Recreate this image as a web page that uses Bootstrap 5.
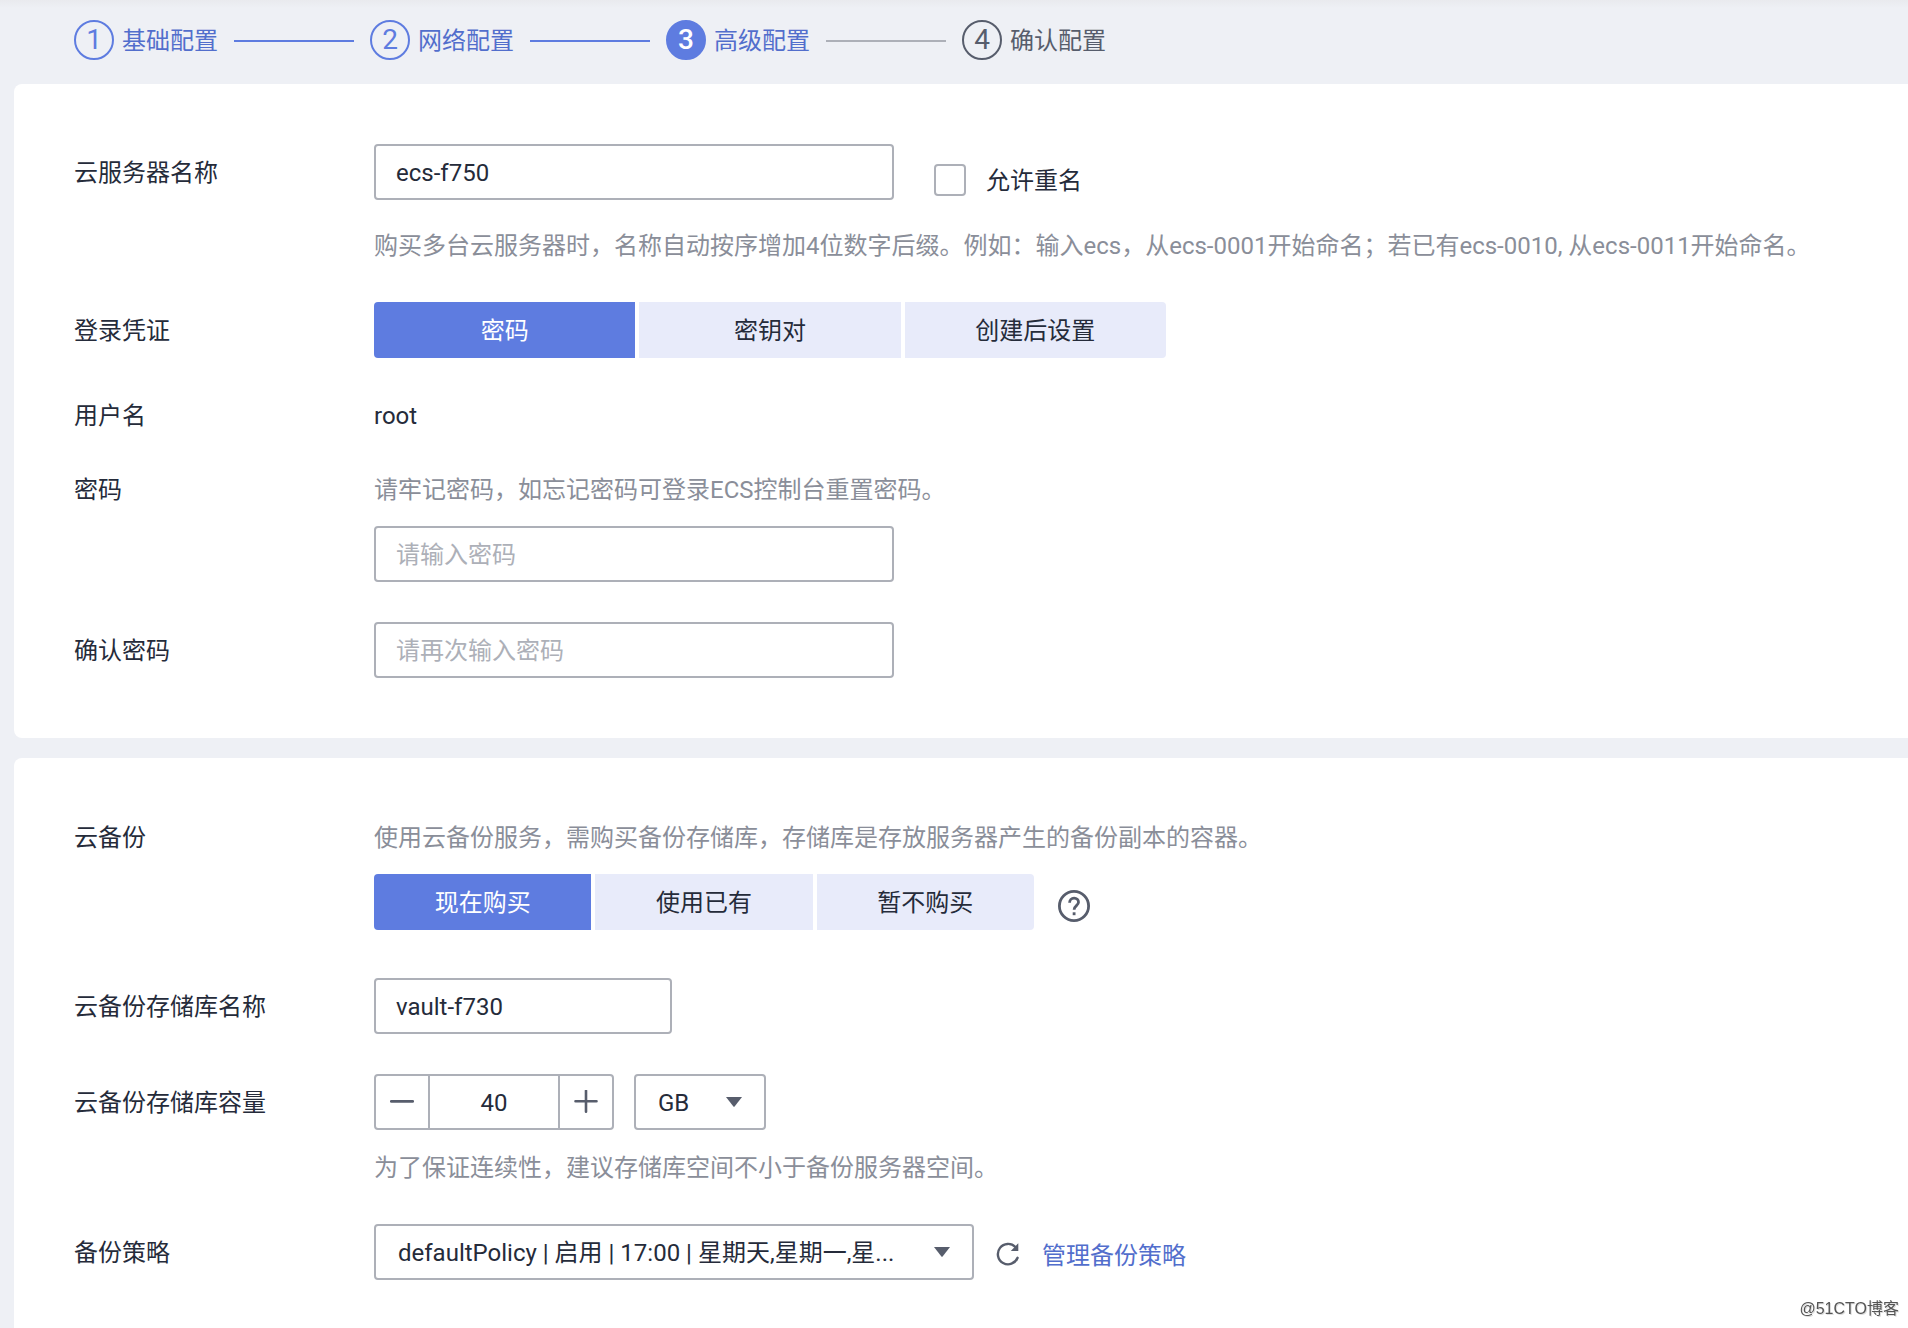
<!DOCTYPE html>
<html lang="zh-CN">
<head>
<meta charset="utf-8">
<meta name="viewport" content="width=device-width, initial-scale=1">
<title>高级配置</title>
<link href="https://cdn.jsdelivr.net/npm/bootstrap@5.3.0/dist/css/bootstrap.min.css" rel="stylesheet">
<style>
:root{--ink:#252b3a;--muted:#8a8e99;--line:#adb0b8;--brand:#5e7ce0;--brand-dark:#526ecc;--icon:#575d6c}
body{font-family:Roboto,"Noto Sans CJK SC",sans-serif;font-size:24px;line-height:32px;color:var(--ink);background:linear-gradient(#e9eaee,#eef0f5 8px) #eef0f5}
.steps{padding:20px 74px 24px}
.step-item{gap:8px;color:var(--brand-dark)}
.step-text{padding-top:2px}
.step-no{width:40px;height:40px;border:2px solid var(--brand);border-radius:50%;font-size:28px;color:var(--brand)}
.step-now .step-no{background:var(--brand);color:#fff;font-weight:500}
.step-next{color:var(--icon)}
.step-next .step-no{border-color:var(--icon);color:var(--icon)}
.step-line{width:120px;height:2px;margin-top:2px;background:var(--brand)}
.step-line-off{background:var(--line)}
.page{gap:20px;padding-left:14px}
.panel{background:#fff;padding:60px}
.panel-a{border-radius:8px 0 0 8px}
.panel-b{border-radius:8px 0 0 0;padding-top:64px;padding-bottom:40px}
.form-line{display:flex;margin-bottom:40px}
.form-line-wide{margin-bottom:48px}
.form-line:last-child{margin-bottom:0}
.line-label{flex:0 0 300px;line-height:32px}
.on-field{padding-top:2px;line-height:54px}
.on-text{line-height:36px}
.line-body{flex:1 1 0;min-width:0}
.tip{color:var(--muted);margin:0}
.tip-low{margin-top:30px}
.tip-top{margin-bottom:20px}
.tip-unit{margin-top:22px}
.unit-row{gap:20px}
.policy-row{gap:22px}
.panel .form-control,.panel .form-select{height:56px;border:2px solid var(--line);border-radius:4px;padding:2px 20px 0;font-size:24px;line-height:32px;color:var(--ink);background-color:#fff}
.panel .form-control::placeholder{color:var(--line);opacity:1}
.w-field{width:520px}
.w-name{width:298px}
.panel .form-select{padding:2px 60px 0 22px;background-image:url("data:image/svg+xml,%3Csvg xmlns='http://www.w3.org/2000/svg' viewBox='0 0 16 10'%3E%3Cpath fill='%23575d6c' d='M0 0h16L8.6 9.4q-.6.6-1.2 0z'/%3E%3C/svg%3E");background-size:16px 10px;background-position:right 22px center}
.panel .w-unit{width:132px;padding-right:44px}
.w-policy{width:600px}
.seg{display:flex;gap:4px}
.seg-3{width:792px}
.seg-2{width:660px}
.seg .btn{flex:1 1 0;height:56px;border:0;border-radius:0;font-size:24px;line-height:32px;padding:2px 0 0;background:#e8ebfa;color:var(--ink)}
.seg .btn.active{background:var(--brand);color:#fff}
.seg .btn:first-child{border-radius:4px 0 0 4px}
.seg .btn:last-child{border-radius:0 4px 4px 0}
.same-name{gap:20px;margin:16px 0 0 40px}
.same-name label{padding-top:2px}
.same-name .form-check-input{width:32px;height:32px;margin:0;border:2px solid var(--line);border-radius:4px}
.counter{width:240px;height:56px;border:2px solid var(--line);border-radius:4px}
.counter .btn{width:52px;padding:0;border:0;border-radius:0;display:flex;align-items:center;justify-content:center}
.panel .counter .form-control{height:52px;border:solid var(--line);border-width:0 2px;border-radius:0;text-align:center;padding:2px 0 0;flex:1 1 0;min-width:0}
.icon-btn{padding:0;border:0;display:flex}
.refresh{padding-top:4px}
.manage{padding-top:8px;color:var(--brand-dark);text-decoration:none}
.origin{position:fixed;right:9px;bottom:7px;font:16px/24px "Liberation Sans","Noto Sans CJK SC",sans-serif;color:#555;text-shadow:1px 1px 0 #ddd}
</style>
</head>
<body class="d-flex flex-column min-vh-100">
<ol class="steps list-unstyled d-flex align-items-center gap-3 m-0">
  <li class="step-item d-flex align-items-center"><span class="step-no d-flex align-items-center justify-content-center">1</span><span class="step-text">基础配置</span></li>
  <li class="step-line" aria-hidden="true"></li>
  <li class="step-item d-flex align-items-center"><span class="step-no d-flex align-items-center justify-content-center">2</span><span class="step-text">网络配置</span></li>
  <li class="step-line" aria-hidden="true"></li>
  <li class="step-item step-now d-flex align-items-center" aria-current="step"><span class="step-no d-flex align-items-center justify-content-center">3</span><span class="step-text">高级配置</span></li>
  <li class="step-line step-line-off" aria-hidden="true"></li>
  <li class="step-item step-next d-flex align-items-center"><span class="step-no d-flex align-items-center justify-content-center">4</span><span class="step-text">确认配置</span></li>
</ol>
<main class="page d-flex flex-column flex-grow-1">
  <section class="panel panel-a">
    <div class="form-line">
      <label class="line-label on-field" for="server">云服务器名称</label>
      <div class="line-body">
        <div class="d-flex">
          <input class="form-control w-field" id="server" type="text" value="ecs-f750">
          <div class="same-name d-flex align-items-center">
            <input class="form-check-input" type="checkbox" id="same">
            <label for="same">允许重名</label>
          </div>
        </div>
        <p class="tip tip-low">购买多台云服务器时，名称自动按序增加4位数字后缀。例如：输入ecs，从ecs-0001开始命名；若已有ecs-0010, 从ecs-0011开始命名。</p>
      </div>
    </div>
    <div class="form-line">
      <div class="line-label on-field" id="login">登录凭证</div>
      <div class="line-body">
        <div class="seg seg-3" role="group" aria-labelledby="login">
          <button type="button" class="btn active">密码</button>
          <button type="button" class="btn">密钥对</button>
          <button type="button" class="btn">创建后设置</button>
        </div>
      </div>
    </div>
    <div class="form-line">
      <div class="line-label on-text">用户名</div>
      <div class="line-body on-text">root</div>
    </div>
    <div class="form-line">
      <label class="line-label" for="pwd">密码</label>
      <div class="line-body">
        <p class="tip tip-top">请牢记密码，如忘记密码可登录ECS控制台重置密码。</p>
        <input class="form-control w-field" id="pwd" type="password" placeholder="请输入密码">
      </div>
    </div>
    <div class="form-line">
      <label class="line-label on-field" for="pwd2">确认密码</label>
      <div class="line-body"><input class="form-control w-field" id="pwd2" type="password" placeholder="请再次输入密码"></div>
    </div>
  </section>
  <section class="panel panel-b flex-grow-1">
    <div class="form-line form-line-wide">
      <div class="line-label" id="backup">云备份</div>
      <div class="line-body">
        <p class="tip tip-top">使用云备份服务，需购买备份存储库，存储库是存放服务器产生的备份副本的容器。</p>
        <div class="d-flex align-items-end gap-4">
          <div class="seg seg-2" role="group" aria-labelledby="backup">
            <button type="button" class="btn active">现在购买</button>
            <button type="button" class="btn">使用已有</button>
            <button type="button" class="btn">暂不购买</button>
          </div>
          <button type="button" class="btn icon-btn mb-2" aria-label="帮助">
            <svg width="32" height="32" viewBox="0 0 32 32" fill="none" stroke="#575d6c" stroke-width="2.8"><circle cx="16" cy="16" r="14.6"/><path d="M11.6 12.8c0-2.8 1.9-4.6 4.5-4.6s4.4 1.7 4.4 4.1c0 3.2-4.4 3.6-4.4 7.4" stroke-width="2.8"/><path d="M16.1 22.3v2.9"/></svg>
          </button>
        </div>
      </div>
    </div>
    <div class="form-line">
      <label class="line-label on-field" for="vault">云备份存储库名称</label>
      <div class="line-body"><input class="form-control w-name" id="vault" type="text" value="vault-f730"></div>
    </div>
    <div class="form-line">
      <label class="line-label on-field" for="size">云备份存储库容量</label>
      <div class="line-body">
        <div class="d-flex unit-row">
          <div class="counter d-flex">
            <button type="button" class="btn" aria-label="减少"><svg width="24" height="24" viewBox="0 0 24 24" stroke="#575d6c" stroke-width="2.8" stroke-linecap="round"><path d="M1.3 11.3h21.4"/></svg></button>
            <input class="form-control" id="size" type="text" inputmode="numeric" value="40">
            <button type="button" class="btn" aria-label="增加"><svg width="24" height="24" viewBox="0 0 24 24" stroke="#575d6c" stroke-width="2.6" stroke-linecap="round"><path d="M1.5 11.3h21M12 .8v21"/></svg></button>
          </div>
          <select class="form-select w-unit" aria-label="单位"><option>GB</option></select>
        </div>
        <p class="tip tip-unit">为了保证连续性，建议存储库空间不小于备份服务器空间。</p>
      </div>
    </div>
    <div class="form-line">
      <label class="line-label on-field" for="policy">备份策略</label>
      <div class="line-body d-flex align-items-center policy-row">
        <select class="form-select w-policy" id="policy"><option>defaultPolicy | 启用 | 17:00 | 星期天,星期一,星...</option></select>
        <button type="button" class="btn icon-btn refresh" aria-label="刷新">
          <svg width="24" height="24" viewBox="0 0 24 24" fill="none" stroke="#575d6c" stroke-width="2.4" stroke-linecap="round"><path d="M21.6 15.8A10.2 10.2 0 1 1 19.4 5"/><path d="M22.3 1.2v7.9h-7.5z" fill="#575d6c" stroke="none"/></svg>
        </button>
        <a class="manage" href="#policy">管理备份策略</a>
      </div>
    </div>
  </section>
</main>
<div class="origin">@51CTO博客</div>
<script src="https://cdn.jsdelivr.net/npm/bootstrap@5.3.0/dist/js/bootstrap.bundle.min.js"></script>
</body>
</html>
